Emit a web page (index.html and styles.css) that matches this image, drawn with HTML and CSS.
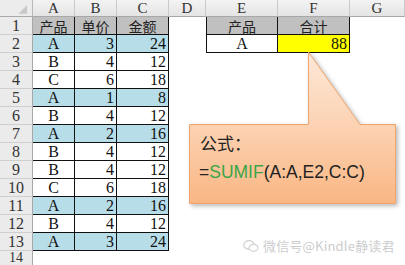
FILE: index.html
```html
<!DOCTYPE html>
<html lang="zh">
<head>
<meta charset="utf-8">
<link rel="stylesheet" href="styles.css">
</head>
<body>
<div class="page">
  <div class="sheet">
    <div class="corner"><svg width="33" height="17" viewBox="0 0 33 17"><polygon points="28,5 28,14 19,14" fill="#c9c9c9"/></svg></div>
    <div class="ch">A</div><div class="ch">B</div><div class="ch">C</div><div class="ch">D</div><div class="ch">E</div><div class="ch">F</div><div class="ch">G</div>

    <div class="rh">1</div><div class="d hd cjk">产品</div><div class="d hd cjk">单价</div><div class="d hd cjk">金额</div><div class="e"></div><div class="d hd cjk lb">产品</div><div class="d hd cjk">合计</div><div class="e"></div>
    <div class="rh">2</div><div class="d bl c">A</div><div class="d bl r">3</div><div class="d bl r">24</div><div class="e"></div><div class="d c lb">A</div><div class="d yl r">88</div><div class="e"></div>
    <div class="rh">3</div><div class="d c">B</div><div class="d r">4</div><div class="d r">12</div><div class="e"></div><div class="e"></div><div class="e"></div><div class="e"></div>
    <div class="rh">4</div><div class="d c">C</div><div class="d r">6</div><div class="d r">18</div><div class="e"></div><div class="e"></div><div class="e"></div><div class="e"></div>
    <div class="rh">5</div><div class="d bl c">A</div><div class="d bl r">1</div><div class="d bl r">8</div><div class="e"></div><div class="e"></div><div class="e"></div><div class="e"></div>
    <div class="rh">6</div><div class="d c">B</div><div class="d r">4</div><div class="d r">12</div><div class="e"></div><div class="e"></div><div class="e"></div><div class="e"></div>
    <div class="rh">7</div><div class="d bl c">A</div><div class="d bl r">2</div><div class="d bl r">16</div><div class="e"></div><div class="e"></div><div class="e"></div><div class="e"></div>
    <div class="rh">8</div><div class="d c">B</div><div class="d r">4</div><div class="d r">12</div><div class="e"></div><div class="e"></div><div class="e"></div><div class="e"></div>
    <div class="rh">9</div><div class="d c">B</div><div class="d r">4</div><div class="d r">12</div><div class="e"></div><div class="e"></div><div class="e"></div><div class="e"></div>
    <div class="rh">10</div><div class="d c">C</div><div class="d r">6</div><div class="d r">18</div><div class="e"></div><div class="e"></div><div class="e"></div><div class="e"></div>
    <div class="rh">11</div><div class="d bl c">A</div><div class="d bl r">2</div><div class="d bl r">16</div><div class="e"></div><div class="e"></div><div class="e"></div><div class="e"></div>
    <div class="rh">12</div><div class="d c">B</div><div class="d r">4</div><div class="d r">12</div><div class="e"></div><div class="e"></div><div class="e"></div><div class="e"></div>
    <div class="rh">13</div><div class="d bl c">A</div><div class="d bl r">3</div><div class="d bl r">24</div><div class="e"></div><div class="e"></div><div class="e"></div><div class="e"></div>
    <div class="rh last">14</div><div class="e"></div><div class="e"></div><div class="e"></div><div class="e"></div><div class="e"></div><div class="e"></div><div class="e"></div>
  </div>

  <svg class="callout-shape" width="405" height="265" viewBox="0 0 405 265">
    <defs>
      <linearGradient id="peach" x1="0" y1="52" x2="0" y2="203" gradientUnits="userSpaceOnUse">
        <stop offset="0" stop-color="#fde8d8"/>
        <stop offset="0.5" stop-color="#fcd2b2"/>
        <stop offset="1" stop-color="#f9b683"/>
      </linearGradient>
    </defs>
    <path d="M189.5,124.5 L308.5,124.5 L308.5,52 L360,124.5 L395.5,124.5 L395.5,203.5 L189.5,203.5 Z" fill="url(#peach)" stroke="#f0a56c" stroke-width="1"/>
  </svg>
  <div class="callout-text">
    <div class="line1">公式：</div>
    <div class="line2">=<span class="fn">SUMIF</span>(A:A,E2,C:C)</div>
  </div>

  <div class="watermark">
    <svg width="16" height="14" viewBox="0 0 16 14"><ellipse cx="6" cy="6" rx="5.2" ry="4.3" fill="none" stroke="#d2d2d2" stroke-width="1.2"/><ellipse cx="10.5" cy="8.8" rx="4.3" ry="3.5" fill="#fff" stroke="#d2d2d2" stroke-width="1.2"/></svg>
    <span>微信号@Kindle静读君</span>
  </div>
</div>
</body>
</html>
```
FILE: styles.css
```css
html, body {
  margin: 0;
  padding: 0;
  background: #fff;
}
.page {
  position: relative;
  width: 405px;
  height: 265px;
  overflow: hidden;
}
.sheet {
  display: grid;
  grid-template-columns: 33px 42px 42px 52px 37px 72px 72px 1fr;
  grid-template-rows: 17px repeat(13, 18px) 14px;
  font-family: "Liberation Serif", "Noto Sans CJK SC", serif;
  font-size: 16px;
  color: #111;
}
.sheet > div {
  box-sizing: border-box;
  display: flex;
  align-items: center;
  overflow: hidden;
  white-space: nowrap;
}
.corner {
  background: #ececec;
  border-right: 1px solid #b8b8b8;
  border-bottom: 1px solid #a8a8a8;
}
.corner svg { display: block; }
.ch {
  background: linear-gradient(#f3f3f3, #e4e4e4);
  border-right: 1px solid #cacaca;
  border-bottom: 1px solid #a8a8a8;
  justify-content: center;
  font-size: 15px;
  color: #333;
}
.rh {
  background: #ebebeb;
  border-right: 1px solid #a8a8a8;
  border-bottom: 1px solid #cfcfcf;
  justify-content: center;
  color: #333;
  font-size: 16px;
}
.rh.last {
  align-items: flex-start;
  font-size: 14px;
  line-height: 14px;
  border-bottom: none;
}
.e {
  background: #fff;
}
.d {
  background: #fff;
  border-right: 1px solid #111;
  border-bottom: 1px solid #111;
}
.lb {
  border-left: 1px solid #111;
}
.hd {
  background: #c0c0c0;
  justify-content: center;
}
.cjk {
  font-family: "Noto Sans CJK SC", sans-serif;
  font-size: 14px;
  color: #222;
}
.bl {
  background: #b7dde8;
}
.yl {
  background: #ffff00;
}
.c {
  justify-content: center;
}
.r {
  justify-content: flex-end;
  padding-right: 2px;
}
.callout-shape {
  position: absolute;
  left: 0;
  top: 0;
  filter: drop-shadow(2px 2px 2px rgba(0, 0, 0, 0.28));
}
.callout-text {
  position: absolute;
  left: 189px;
  top: 132px;
  width: 206px;
  display: flex;
  flex-direction: column;
  gap: 7px;
  padding-left: 10px;
  box-sizing: border-box;
  color: #222;
}
.line1 {
  font-family: "Noto Sans CJK SC", sans-serif;
  font-size: 17px;
  line-height: 22px;
  padding-left: 1px;
}
.line2 {
  font-family: "Liberation Sans", sans-serif;
  font-size: 17.5px;
  line-height: 22px;
}
.fn {
  color: #3aa548;
}
.watermark {
  position: absolute;
  left: 243px;
  top: 238px;
  display: flex;
  align-items: center;
  gap: 4px;
  font-family: "Noto Sans CJK SC", sans-serif;
  font-size: 13px;
  letter-spacing: 0.2px;
  line-height: 16px;
  color: #cdcdcd;
}
.watermark svg { display: block; }
```
